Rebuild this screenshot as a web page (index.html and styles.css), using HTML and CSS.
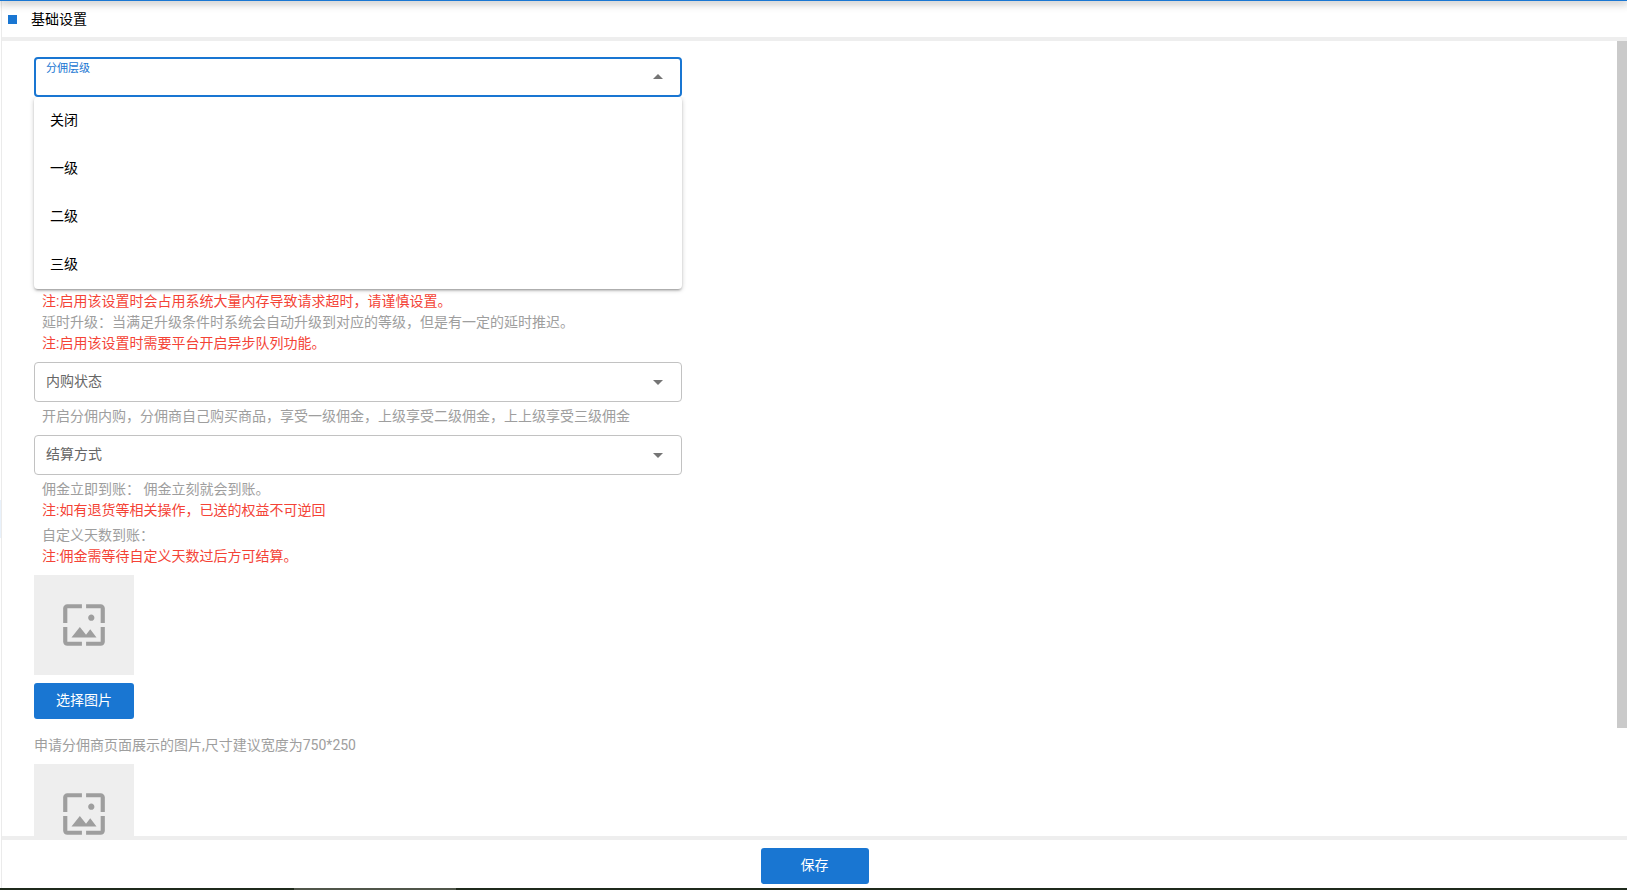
FILE: index.html
```html
<!DOCTYPE html>
<html lang="zh-CN">
<head>
<meta charset="utf-8">
<title>基础设置</title>
<link rel="stylesheet" href="styles.css">
</head>
<body>
<svg width="0" height="0" class="sprite" aria-hidden="true">
  <symbol id="wallpaper" viewBox="0 0 24 24"><path d="M4 4h7V2H4c-1.1 0-2 .9-2 2v7h2V4zm6 9l-4 5h12l-3-4-2.03 2.71L10 13zm7-4.5c0-.83-.67-1.5-1.5-1.5S14 7.67 14 8.5s.67 1.5 1.5 1.5S17 9.33 17 8.5zM20 2h-7v2h7v7h2V4c0-1.1-.9-2-2-2zm0 18h-7v2h7c1.1 0 2-.9 2-2v-7h-2v7zM4 13H2v7c0 1.1.9 2 2 2h7v-2H4v-7z"/></symbol>
  <symbol id="caret" viewBox="0 0 24 24"><path d="M7 10l5 5 5-5z"/></symbol>
</svg>
<div class="app">
  <div class="topbar"></div>
  <div class="workspace">
    <div class="drawer-edge"></div>
    <main class="panel">
      <header class="panel-head">
        <span class="marker"></span>
        <h1 class="title">基础设置</h1>
      </header>
      <div class="body">
        <form class="content" id="settings">
          <div class="field field-open">
            <label class="field-label" for="level">分佣层级</label>
            <select class="field-select" id="level"><option value=""></option></select>
            <svg class="caret"><use href="#caret"/></svg>
          </div>
          <ul class="menu" role="listbox" aria-label="分佣层级">
            <li class="menu-item" role="option">关闭</li>
            <li class="menu-item" role="option">一级</li>
            <li class="menu-item" role="option">二级</li>
            <li class="menu-item" role="option">三级</li>
          </ul>
          <div class="notes notes-menu">
            <p class="note warn">注:启用该设置时会占用系统大量内存导致请求超时，请谨慎设置。</p>
            <p class="note">延时升级：当满足升级条件时系统会自动升级到对应的等级，但是有一定的延时推迟。</p>
            <p class="note warn">注:启用该设置时需要平台开启异步队列功能。</p>
          </div>
          <div class="field">
            <label class="field-label" for="inner">内购状态</label>
            <select class="field-select" id="inner"><option value=""></option></select>
            <svg class="caret"><use href="#caret"/></svg>
          </div>
          <div class="notes">
            <p class="note">开启分佣内购，分佣商自己购买商品，享受一级佣金，上级享受二级佣金，上上级享受三级佣金</p>
          </div>
          <div class="field">
            <label class="field-label" for="settle">结算方式</label>
            <select class="field-select" id="settle"><option value=""></option></select>
            <svg class="caret"><use href="#caret"/></svg>
          </div>
          <div class="notes">
            <p class="note">佣金立即到账： 佣金立刻就会到账。</p>
            <p class="note warn">注:如有退货等相关操作，已送的权益不可逆回</p>
            <p class="note note-gap">自定义天数到账：</p>
            <p class="note warn">注:佣金需等待自定义天数过后方可结算。</p>
          </div>
          <div class="picture"><svg class="picture-icon"><use href="#wallpaper"/></svg></div>
          <button class="btn btn-pick" type="button">选择图片</button>
          <p class="note picture-note">申请分佣商页面展示的图片,尺寸建议宽度为750*250</p>
          <div class="picture"><svg class="picture-icon"><use href="#wallpaper"/></svg></div>
        </form>
        <div class="scroll-thumb"></div>
      </div>
      <footer class="panel-foot">
        <button class="btn btn-save" type="submit" form="settings">保存</button>
      </footer>
    </main>
  </div>
  <div class="bottom-edge"></div>
</div>
</body>
</html>
```
FILE: styles.css
```css
* { box-sizing: border-box; }
body {
  margin: 0;
  background: #fff;
  color: #000;
  font: 14px/21px Roboto, "Noto Sans CJK SC", sans-serif;
}
h1, p, ul { margin: 0; padding: 0; }
.sprite { position: absolute; }

.app {
  display: flex;
  flex-direction: column;
  height: 100vh;
  overflow: hidden;
}
.topbar {
  position: relative;
  flex: none;
  height: 1px;
  background: #1976d2;
  box-shadow: 0 0 10px 2px rgba(0, 0, 0, .3), 0 0 10px rgba(0, 0, 0, .24);
}
.workspace { flex: 1; min-height: 0; display: flex; }
.drawer-edge {
  width: 2px;
  border-right: 1px solid #ebebeb;
  background: linear-gradient(#fff 56.3%, #e8f1fb 56.3%, #e8f1fb 60.5%, #fff 60.5%);
}
.bottom-edge {
  flex: none;
  height: 2px;
  background: linear-gradient(90deg, #1f2a1c 18.1%, #50564a 18.1%, #50564a 28%, #1f2a1c 28%);
}

.panel { flex: 1; min-width: 0; display: flex; flex-direction: column; }
.panel-head {
  flex: none;
  display: flex;
  align-items: center;
  gap: 14px;
  height: 40px;
  padding: 0 6px;
  border-bottom: 4px solid #eee;
}
.marker { width: 9px; height: 9px; background: #1976d2; }
.title { font-size: 14px; font-weight: 400; }

.body { flex: 1; min-height: 0; display: flex; overflow: hidden; }
.content { flex: 1; min-width: 0; padding: 16px 32px; }
.scroll-thumb { flex: none; width: 10px; height: 86.4%; background: #cacaca; }

.field {
  display: grid;
  align-items: center;
  max-width: 648px;
  height: 40px;
}
.field > * { grid-area: 1 / 1; }
.field-select {
  appearance: none;
  width: 100%;
  height: 100%;
  padding: 0 36px 0 12px;
  border: 1px solid #c2c2c2;
  border-radius: 4px;
  background: #fff;
  font: inherit;
}
.field-label {
  z-index: 1;
  justify-self: start;
  padding: 0 0 2px 12px;
  color: #666;
  pointer-events: none;
}
.caret {
  z-index: 1;
  justify-self: end;
  width: 24px;
  height: 24px;
  margin-right: 12px;
  fill: #757575;
  pointer-events: none;
}
.field-open .field-select { border: 2px solid #1976d2; }
.field-open .field-label {
  align-self: start;
  padding-top: 4px;
  color: #1976d2;
  font-size: 11px;
  line-height: 16px;
}
.field-open .caret { transform: rotate(180deg); }

.menu {
  max-width: 648px;
  list-style: none;
  border-radius: 4px;
  background: #fff;
  box-shadow: 0 1px 5px rgba(0, 0, 0, .2), 0 2px 2px rgba(0, 0, 0, .14), 0 3px 1px -2px rgba(0, 0, 0, .12);
  clip-path: inset(0 -8px -8px);
}
.menu-item {
  display: flex;
  align-items: center;
  height: 48px;
  padding: 0 16px 2px;
}

.notes { padding: 4px 8px 8px; }
.notes-menu { padding-top: 2px; }
.note { color: #9e9e9e; }
.note-gap { margin-top: 4px; }
.warn { color: #f44336; }

.picture {
  display: flex;
  align-items: center;
  justify-content: center;
  width: 100px;
  height: 100px;
  background: #eee;
}
.picture-icon { width: 50px; height: 50px; fill: #9e9e9e; }
.picture-note { margin: 16px 0 8px; }

.btn {
  display: block;
  height: 36px;
  padding: 0 0 2px;
  border: 0;
  border-radius: 3px;
  background: #1976d2;
  color: #fff;
  font: inherit;
}
.btn-pick { width: 100px; margin-top: 8px; }
.btn-save { width: 108px; }

.panel-foot {
  flex: none;
  display: flex;
  justify-content: center;
  padding: 8px 0 4px;
  border-top: 4px solid #eee;
}
```
